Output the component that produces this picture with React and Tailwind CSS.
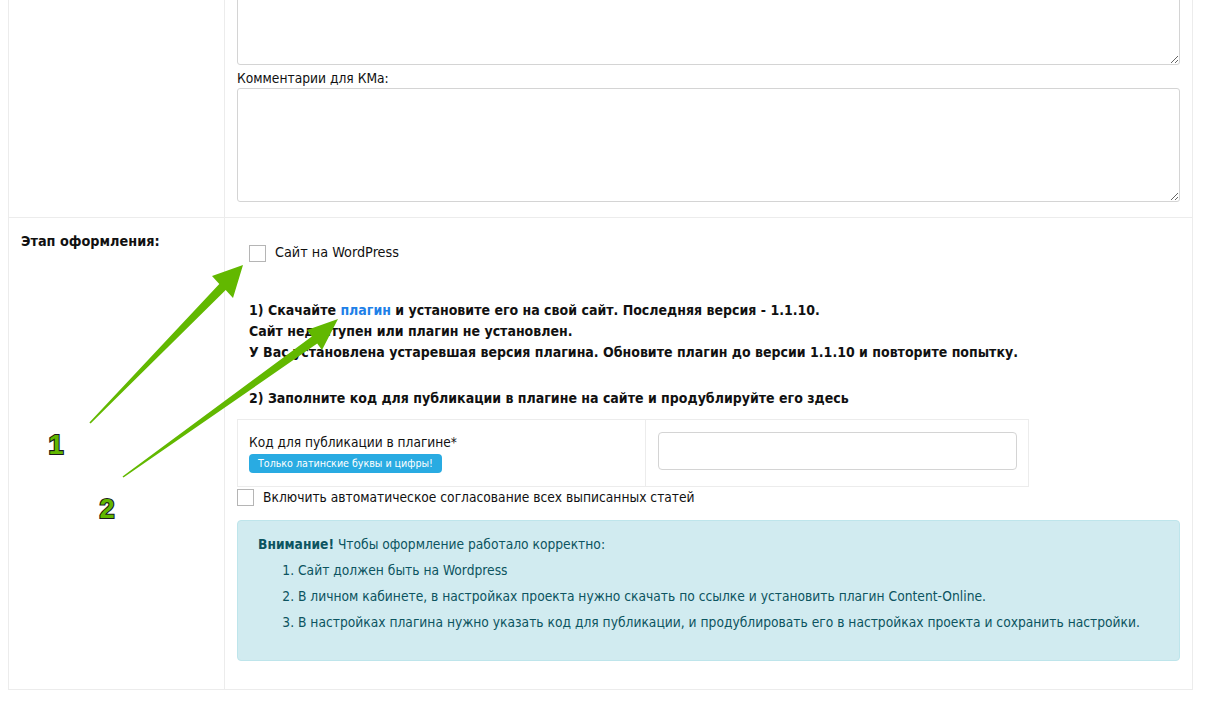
import React from "react";

const font = { fontFamily: '"DejaVu Sans Condensed", "DejaVu Sans", Tahoma, sans-serif' };

function Box({ className = "" }) {
  return <span className={`inline-block w-[17px] h-[17px] border border-[#b5b5b5] bg-white shrink-0 ${className}`} />;
}

export default function App() {
  return (
    <div className="relative w-[1205px] h-[702px] overflow-hidden bg-white text-[13.7px] text-[#111]" style={font}>
      <div className="ml-[8px] mt-[-52px] w-[1185px] border border-[#ececec]">
        {/* Row 1 */}
        <div className="flex border-b border-[#ececec]">
          <div className="w-[216px] shrink-0 border-r border-[#ececec]" />
          <div className="flex-1 px-[12px] pb-[15px]">
            <textarea className="block w-full h-[116px] border border-[#d4d4d4] rounded-[3px] resize-y bg-white" />
            <div className="mt-[4px] leading-[19px]">Комментарии для КМа:</div>
            <textarea className="block w-full h-[114px] border border-[#d4d4d4] rounded-[3px] resize-y bg-white" />
          </div>
        </div>
        {/* Row 2 */}
        <div className="flex">
          <div className="w-[216px] shrink-0 border-r border-[#ececec] pl-[12px] pt-[14px] font-bold text-[14.3px] leading-[18px]">
            Этап оформления:
          </div>
          <div className="flex-1 px-[12px] pt-[26px] pb-[28px]">
            <label className="flex items-center ml-[12px] h-[18px]">
              <Box />
              <span className="ml-[9px] text-[14.3px]">Сайт на WordPress</span>
            </label>
            <div className="ml-[12px] mt-[38px] font-bold text-[14px] leading-[21px]">
              <div>
                1) Скачайте <span className="text-[#1e80e8]">плагин</span> и установите его на свой сайт. Последняя версия - 1.1.10.
              </div>
              <div>Сайт недоступен или плагин не установлен.</div>
              <div>У Вас установлена устаревшая версия плагина. Обновите плагин до версии 1.1.10 и повторите попытку.</div>
              <div className="mt-[25px]">2) Заполните код для публикации в плагине на сайте и продублируйте его здесь</div>
            </div>
            <div className="mt-[10px] w-[792px] h-[68px] border border-[#ececec] flex">
              <div className="w-[408px] border-r border-[#ececec] pl-[11px] pt-[13px]">
                <div className="leading-[19px] text-[13.6px]">Код для публикации в плагине*</div>
                <span className="inline-block mt-[1px] rounded-[4px] bg-[#29abe2] text-white text-[10.6px] leading-[19px] px-[9px]">
                  Только латинские буквы и цифры!
                </span>
              </div>
              <div className="flex-1 pl-[12px] pt-[12px]">
                <input className="block w-[359px] h-[38px] border border-[#d4d4d4] rounded-[4px] bg-white" />
              </div>
            </div>
            <label className="flex items-center mt-[1px] h-[18px]">
              <Box />
              <span className="ml-[9px]">Включить автоматическое согласование всех выписанных статей</span>
            </label>
            <div className="mt-[14px] h-[141px] rounded-[4px] border border-[#bee5eb] bg-[#d1ebf0] text-[#0c5460] pl-[20px] pt-[13px]">
              <div className="leading-[20px]">
                <span className="font-bold">Внимание!</span> Чтобы оформление работало корректно:
              </div>
              <ol className="mt-[3px] ml-[40px] list-decimal leading-[26px]">
                <li>Сайт должен быть на Wordpress</li>
                <li>В личном кабинете, в настройках проекта нужно скачать по ссылке и установить плагин Content-Online.</li>
                <li>В настройках плагина нужно указать код для публикации, и продублировать его в настройках проекта и сохранить настройки.</li>
              </ol>
            </div>
          </div>
        </div>
      </div>

      {/* annotation arrows */}
      <svg className="absolute left-0 top-0 pointer-events-none" width="1205" height="702">
        <polygon
          fill="#62b800"
          points="89.4,422.4 219.3,283.9 212,276 243,265 233,298 225.7,290.1 90.6,423.6"
        />
        <polygon
          fill="#62b800"
          points="122.5,476.4 311.8,336.4 307,330 338,319 322,350 317.2,343.6 123.5,477.6"
        />
        <text
          x="56"
          y="454"
          textAnchor="middle"
          fontFamily="Liberation Sans, Arial, sans-serif"
          fontWeight="bold"
          fontSize="27"
          fill="#62b800"
          stroke="#1a1a1a"
          strokeWidth="2.2"
          paintOrder="stroke"
        >
          1
        </text>
        <text
          x="107"
          y="518"
          textAnchor="middle"
          fontFamily="Liberation Sans, Arial, sans-serif"
          fontWeight="bold"
          fontSize="27"
          fill="#62b800"
          stroke="#1a1a1a"
          strokeWidth="2.2"
          paintOrder="stroke"
        >
          2
        </text>
      </svg>
    </div>
  );
}
